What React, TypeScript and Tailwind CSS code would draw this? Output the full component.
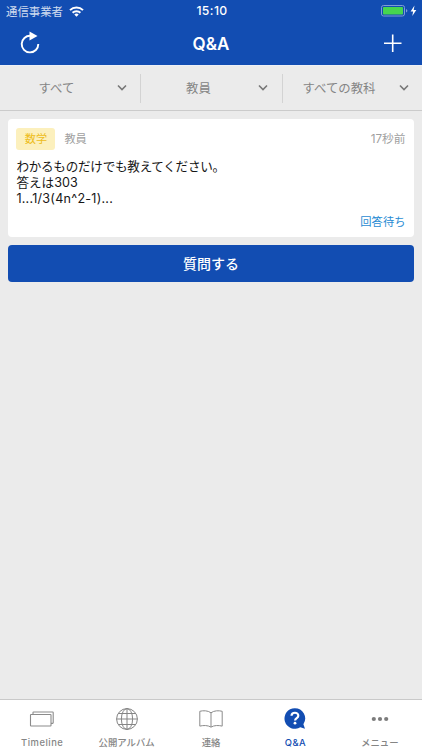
const filters = [
  { label: "すべて", box: "w-[140px]", text: "w-[116px] pr-[3px]" },
  { label: "教員", box: "w-[142px] border-l", text: "w-[116px] pr-px" },
  { label: "すべての教科", box: "w-[140px] border-l", text: "w-[115px] pr-[3px]" },
];

const question = {
  subject: "数学",
  target: "教員",
  time: "17秒前",
  lines: [
    { text: "わかるものだけでも教えてください。", style: "tracking-[-0.27px]" },
    { text: "答えは303", style: "" },
    { text: "1...1/3(4n^2-1)...", style: "tracking-[0.23px]" },
  ],
  status: "回答待ち",
};

const StatusBar = () => (
  <div className="flex h-[22px] items-center text-white">
    <div className="flex flex-1 items-center pl-[6px]">
      <span className="pt-px text-[11.4px] leading-4 opacity-80">通信事業者</span>
      <svg className="ml-[6px]" width="15" height="11" viewBox="0 0 15 11" fill="none" stroke="white" strokeWidth="2">
        <path d="M1 4.1a9.2 9.2 0 0 1 13 0" />
        <path d="M3.6 6.8a5.5 5.5 0 0 1 7.8 0" />
        <path d="M7.5 10.8 5.3 8.6a3.1 3.1 0 0 1 4.4 0z" fill="white" stroke="none" />
      </svg>
    </div>
    <span className="text-[12.2px] font-medium leading-4 tracking-[0.4px]">15:10</span>
    <div className="flex flex-1 items-center justify-end pr-[4px]">
      <svg width="37" height="12" viewBox="0 0 37 12">
        <rect x="0.5" y="0.5" width="23" height="10.5" rx="2" fill="none" stroke="#7e9dd5" />
        <rect x="2" y="2" width="20" height="7.5" rx="0.7" fill="#46d64f" />
        <path d="M25 4v3.6q1.4-.5 1.4-1.8T25 4z" fill="#7e9dd5" />
        <path d="M33.5 0.5 29.6 6.4h2.5l-.8 4.6 4-6.1h-2.6z" fill="white" />
      </svg>
    </div>
  </div>
);

const NavBar = () => (
  <div className="flex h-[43px] items-center justify-between pl-5 pr-5 text-white">
    <svg className="mt-[-2px]" width="20" height="24" viewBox="0 0 20 24">
      <path d="M10.5 4.8A8.3 8.3 0 1 0 18.3 13" fill="none" stroke="white" strokeWidth="1.9" />
      <path d="M9.5 0.4 17.5 5 9.5 9.4z" fill="white" />
    </svg>
    <h1 className="pr-px text-[17px] font-semibold leading-5">Q&amp;A</h1>
    <svg className="mt-[-2px]" width="19" height="20" viewBox="0 0 19 20" stroke="white" strokeWidth="1.6">
      <path d="M9.7 1.5v17.5M1 10.2h17.5" />
    </svg>
  </div>
);

const TimelineIcon = () => (
  <svg className="shrink-0" width="26" height="24" viewBox="0 0 26 24" fill="none" stroke="#8b8b8b" strokeWidth="1.1">
    <rect x="1.5" y="7.5" width="20.5" height="11.5" rx="0.6" />
    <path d="M4 7.5V5.6q0-.6.6-.6h19q.6 0 .6.6v10.2q0 .6-.6.6H22" />
  </svg>
);

const GlobeIcon = () => (
  <svg className="shrink-0" width="24" height="24" viewBox="0 0 24 24" fill="none" stroke="#858585" strokeWidth="1">
    <circle cx="12" cy="12" r="10.4" />
    <ellipse cx="12" cy="12" rx="5.6" ry="10.4" />
    <path d="M12 1.6v20.8M1.6 12h20.8M3.3 6.5h17.4M3.3 17.5h17.4" />
  </svg>
);

const BookIcon = () => (
  <svg className="shrink-0" width="26" height="24" viewBox="0 0 26 24" fill="none" stroke="#8b8b8b" strokeWidth="1">
    <path d="M13 5.8C9.8 3.4 5.2 3.4 1.8 4.3v14.8c3.7-.9 8-.9 11.2 1 3.2-1.9 7.5-1.9 11.2-1V4.3c-3.4-.9-8-.9-11.2 1.5zM13 5.8v14.3" />
  </svg>
);

const QuestionIcon = () => (
  <svg className="shrink-0" width="24" height="24" viewBox="0 0 24 24">
    <path d="M11.7 1.2a10.3 10.3 0 1 0 5.6 19l4.7 1.6-1.6-4.6A10.3 10.3 0 0 0 11.7 1.2z" fill="#124db2" />
    <path d="M8.5 8.8c.2-4.1 6.8-4 6.8-.1 0 2.4-3.2 2.4-3.2 4.8" fill="none" stroke="white" strokeWidth="2.2" />
    <circle cx="12" cy="16.2" r="1.4" fill="white" />
  </svg>
);

const MoreIcon = () => (
  <svg className="shrink-0" width="24" height="24" viewBox="0 0 24 24" fill="#7c7c7c">
    <circle cx="5.8" cy="12" r="2.1" />
    <circle cx="12" cy="12" r="2.1" />
    <circle cx="18.2" cy="12" r="2.1" />
  </svg>
);

const tabs = [
  { label: "Timeline", icon: <TimelineIcon />, style: "text-[#858585] tracking-[0.5px]" },
  { label: "公開アルバム", icon: <GlobeIcon />, style: "text-[#858585]" },
  { label: "連絡", icon: <BookIcon />, style: "text-[#858585]" },
  { label: "Q&A", icon: <QuestionIcon />, style: "text-[#124db2] tracking-[0.4px]" },
  { label: "メニュー", icon: <MoreIcon />, style: "text-[#858585]" },
];

export default function App() {
  return (
    <div className="flex h-[750px] w-[422px] flex-col overflow-hidden bg-[#ebebeb] font-['Inter','Noto_Sans_CJK_JP',sans-serif]">
      <header className="h-[65px] shrink-0 bg-[#124db2]">
        <StatusBar />
        <NavBar />
      </header>

      <div className="flex h-[46px] shrink-0 items-center border-b border-[#cbcbcb] border-t border-t-[#edf0f6]">
        {filters.map((f) => (
          <div key={f.label} className={`flex h-[29px] items-center border-[#d3d3d3] text-[#858585] ${f.box}`}>
            <span className={`pt-[2px] text-center text-[12.4px] ${f.text}`}>{f.label}</span>
            <svg width="12" height="8" viewBox="0 0 12 8" fill="none" stroke="#777777" strokeWidth="1.6">
              <path d="M2 1.5 6 5.5l4-4" />
            </svg>
          </div>
        ))}
      </div>

      <main className="flex flex-1 flex-col gap-2 pl-[8.4px] pr-[8.5px] pt-2">
        <div className="flex h-[118px] flex-col rounded-[4px] bg-white px-2 pt-[9px]">
          <div className="flex h-[22px] items-center text-[11.2px] text-[#a0a0a0]">
            <span className="flex h-[22px] w-[39px] items-center justify-center rounded-[3px] bg-[#fcf0bd] pt-px text-[#edbd20]">
              {question.subject}
            </span>
            <span className="ml-[9px] pt-px">{question.target}</span>
            <span className="ml-auto pt-px text-[11.7px]">{question.time}</span>
          </div>
          <div className="mt-[9px] text-[12.6px] leading-4 text-[#161616]">
            {question.lines.map((line) => (
              <p key={line.text} className={line.style}>{line.text}</p>
            ))}
          </div>
          <div className="mt-[7px] text-right text-[11.3px] leading-4 text-[#288bd3]">{question.status}</div>
        </div>
        <button className="h-[36.5px] rounded-[4px] bg-[#124db2] text-[14px] font-medium text-white">質問する</button>
      </main>

      <nav className="flex h-[51px] shrink-0 border-t border-[#c9c9c9] bg-white">
        {tabs.map((tab) => (
          <div key={tab.label} className="flex flex-1 flex-col items-center pt-[7px]">
            {tab.icon}
            <span className={`mt-[6px] shrink-0 whitespace-nowrap text-[9.4px] font-medium leading-3 ${tab.style}`}>
              {tab.label}
            </span>
          </div>
        ))}
      </nav>
    </div>
  );
}
